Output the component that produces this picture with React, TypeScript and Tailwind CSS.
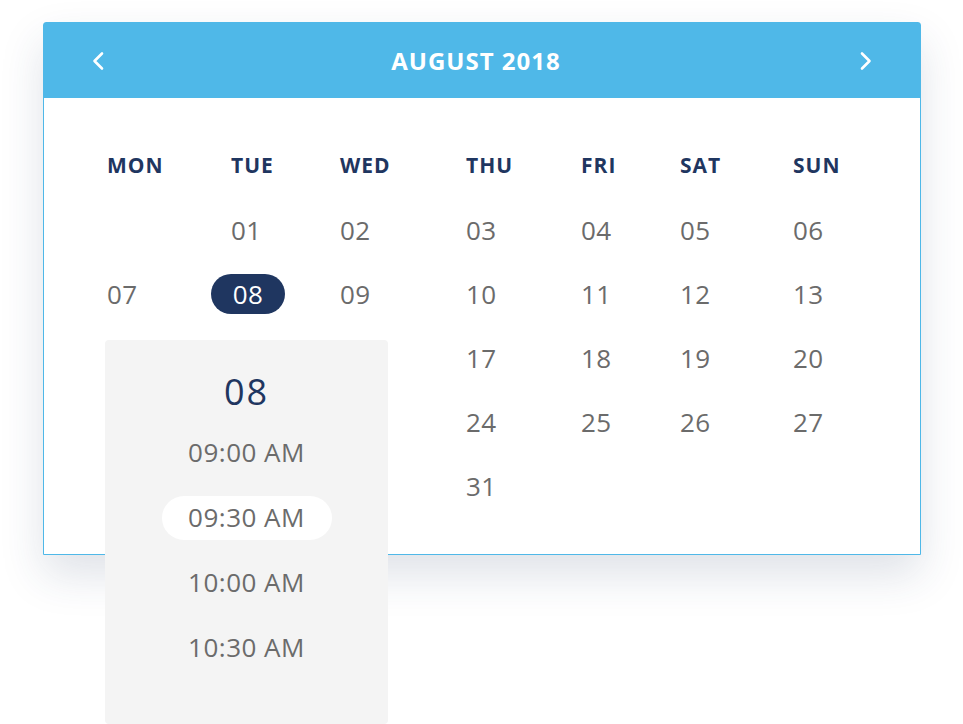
import React from 'react';

const NAVY = 'text-[#1f3660]';

// dates under the time picker are hidden by it, so those cells stay empty
const columns: { day: string; dates: string[] }[] = [
  { day: 'MON', dates: ['', '07', '', '', ''] },
  { day: 'TUE', dates: ['01', '08', '', '', ''] },
  { day: 'WED', dates: ['02', '09', '', '', ''] },
  { day: 'THU', dates: ['03', '10', '17', '24', '31'] },
  { day: 'FRI', dates: ['04', '11', '18', '25'] },
  { day: 'SAT', dates: ['05', '12', '19', '26'] },
  { day: 'SUN', dates: ['06', '13', '20', '27'] },
];

const times = ['09:00 AM', '09:30 AM', '10:00 AM', '10:30 AM'];

function Chevron({ dir }: { dir: 'left' | 'right' }) {
  return (
    <svg width="12" height="20" viewBox="0 0 12 20" fill="none">
      <path
        d={dir === 'left' ? 'M10 2.5 L2.5 10 L10 17.5' : 'M2 2.5 L9.5 10 L2 17.5'}
        stroke="white"
        strokeWidth="2.6"
        strokeLinecap="round"
        strokeLinejoin="round"
      />
    </svg>
  );
}

export default function App() {
  return (
    <div
      className="h-[724px] overflow-hidden bg-white pt-[22px] pl-[43px]"
      style={{ fontFamily: '"Open Sans", "Liberation Sans", sans-serif' }}
    >
      <div className="relative w-[878px] rounded-t-[3px] border border-[#4fb8e8] bg-white shadow-[0_20px_44px_rgba(40,60,100,0.15)]">
        {/* header */}
        <div className="flex h-[75px] items-center bg-[#4fb8e8] px-[48px]">
          <Chevron dir="left" />
          <div className="flex-1 pr-[12px] text-center text-[24px] font-bold tracking-[1px] text-white">
            AUGUST 2018
          </div>
          <Chevron dir="right" />
        </div>

        {/* month grid */}
        <div className="grid grid-cols-[124px_109px_126px_115px_99px_113px_1fr] pt-[36px] pb-[36px] pl-[63px]">
          {columns.map((col) => (
            <div key={col.day} className="flex flex-col">
              <div className={`flex h-[64px] items-center text-[21px] font-bold tracking-[1px] ${NAVY}`}>
                {col.day}
              </div>
              {col.dates.map((d, i) => (
                <div key={i} className="flex h-[64px] items-center text-[26px] tracking-[0.5px] text-[#6b6b6b]">
                  {d === '08' ? (
                    <span className="-ml-[20px] flex h-[40px] w-[74px] items-center justify-center rounded-full bg-[#1f3660] text-white">
                      {d}
                    </span>
                  ) : (
                    d
                  )}
                </div>
              ))}
            </div>
          ))}
        </div>

        {/* time picker */}
        <div className="absolute top-[317px] left-[61px] flex h-[384px] w-[283px] flex-col items-center rounded-[4px] bg-[#f4f4f4] pt-[24px]">
          <div className={`flex h-[56px] items-center text-[36px] tracking-[2px] ${NAVY}`}>08</div>
          {times.map((t) => (
            <div key={t} className="flex h-[65px] items-center">
              <span
                className={`flex h-[44px] w-[170px] items-center justify-center rounded-full text-[26px] tracking-[0.5px] text-[#6b6b6b] ${
                  t === '09:30 AM' ? 'bg-white' : ''
                }`}
              >
                {t}
              </span>
            </div>
          ))}
        </div>
      </div>
    </div>
  );
}
